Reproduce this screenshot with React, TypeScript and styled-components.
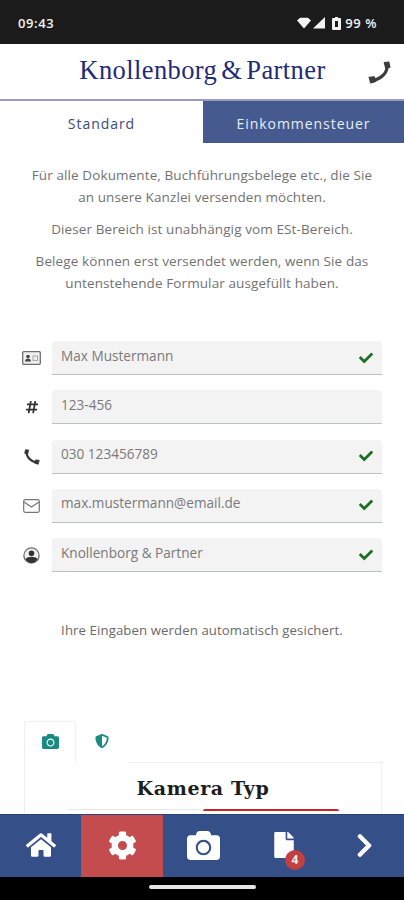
import React from "react";
import styled, { createGlobalStyle } from "styled-components";
import { FaHome, FaCog, FaCamera, FaFile, FaChevronRight, FaHashtag, FaCheck, FaShieldAlt } from "react-icons/fa";

const Global = createGlobalStyle`
  html, body { margin: 0; padding: 0; background: #fff; }
  * { box-sizing: border-box; }
  body { font-family: "Open Sans", "Liberation Sans", sans-serif; }
`;
const Screen = styled.div`
  width: 404px; height: 900px; display: flex; flex-direction: column; overflow: hidden; background: #fff;
`;
const StatusBar = styled.div`
  height: 44px; flex: none; background: #1b1b1b; color: #f2f2f2; display: flex; align-items: center;
  justify-content: space-between; padding: 2px 27px 0 18px; font-size: 13px; font-weight: 600; letter-spacing: 0.6px;
`;
const StatusRight = styled.div`
  display: flex; align-items: center; gap: 4px;
`;
const Header = styled.header`
  height: 57px; flex: none; display: flex; align-items: center; position: relative; justify-content: center;
  border-bottom: 2px solid #9c9cc2; padding: 0 0 3px 1px;
`;
const Logo = styled.div`
  font-family: "Liberation Serif", serif; font-size: 26.500px; color: #1f2a78; letter-spacing: 0.4px; word-spacing: -3px; white-space: nowrap;
`;
const HeaderCall = styled.div`
  position: absolute; right: 13px; top: 17px; line-height: 0;
`;
const Tabs = styled.div`
  height: 42px; flex: none; display: grid; grid-template-columns: 203px 201px;
`;
const Tab = styled.div<{ $active?: boolean }>`
  display: flex; align-items: center; justify-content: center; font-size: 14px; letter-spacing: 0.95px; padding-top: 2px;
  background: ${p => (p.$active ? "#fff" : "#455b90")};
  color: ${p => (p.$active ? "#3a4a78" : "#e8ecf4")};
`;
const Main = styled.main`
  flex: 1; min-height: 0; overflow: hidden; display: flex; flex-direction: column;
`;
const Intro = styled.div`
  padding: 21px 10px 0; text-align: center; color: #727272; font-size: 13.500px; line-height: 22px; letter-spacing: 0.1px;
`;
const Para = styled.p`
  margin: 0 0 10px;
`;
const Form = styled.div`
  margin-top: 37px; padding: 0 22px 0 22px; display: flex; flex-direction: column; gap: 15.300px;
`;
const Row = styled.div`
  display: flex; align-items: center; gap: 11px; height: 34px;
`;
const FieldIcon = styled.div<{ $dark?: boolean }>`
  width: 19px; flex: none; display: flex; justify-content: center; font-size: 14px; line-height: 0;
  color: ${p => (p.$dark ? "#333" : "#6f6f6f")};
`;
const Field = styled.div`
  flex: 1; height: 34px; background: #f3f3f3; border-bottom: 1.500px solid #bcc2bc; border-radius: 4px 4px 0 0;
  display: flex; align-items: center; justify-content: space-between; padding: 0 9px 5px 9px;
  color: #7a7a7a; font-size: 13.600px;
`;
const Valid = styled.span`
  color: #1c7024; font-size: 14px; line-height: 0; margin-top: 5px;
`;
const SavedNote = styled.div`
  margin-top: 49px; text-align: center; color: #6a6a6a; font-size: 13.200px; letter-spacing: 0.100px;
`;
const Card = styled.div`
  margin: 82px 22px 0 24px; flex: none;
`;
const CardTabs = styled.div`
  display: flex; height: 42px;
`;
const CardTab = styled.div<{ $active?: boolean }>`
  width: 52px; display: flex; align-items: center; justify-content: center; padding-bottom: 3px; color: #1a8a84; line-height: 0;
  background: #fff; position: relative; z-index: 1;
  ${p => (p.$active ? "border: 1px solid #f0f0f0; border-bottom: 0; border-radius: 3px 3px 0 0;" : "")}
`;
const CardBody = styled.div`
  border: 1px solid #f0f0f0; margin-top: -1px; height: 120px; display: flex; flex-direction: column; align-items: center;
`;
const CardTitle = styled.div`
  font-family: "DejaVu Serif", "Liberation Serif", serif; font-weight: 700; font-size: 19px; letter-spacing: 0.65px; color: #1d1d1d; margin-top: 14px; height: 27px;
`;
const Switcher = styled.div`
  width: 272px; height: 3px; margin-top: 5px; display: grid; grid-template-columns: 1fr 1fr;
`;
const SwitchPart = styled.div<{ $on?: boolean }>`
  border-radius: 3px 3px 0 0;
  background: ${p => (p.$on ? "#c8242c" : "#e6e6e6")};
  height: ${p => (p.$on ? "2px" : "1px")};
`;
const BottomNav = styled.nav`
  height: 63px; flex: none; background: #354f88; display: grid; grid-template-columns: 81px 82px 81px 80px 80px;
  border-top: 1px solid #2b4278;
`;
const NavItem = styled.div<{ $active?: boolean }>`
  display: flex; align-items: center; justify-content: center; color: #fff; line-height: 0; position: relative; padding-bottom: 2px;
  background: ${p => (p.$active ? "#c44c4e" : "transparent")};
`;
const Badge = styled.span`
  position: absolute; left: 41px; top: 35px; width: 20px; height: 20px; border-radius: 50%; background: #c23f42; color: #eee;
  font-size: 12px; font-weight: 700; line-height: 20px; text-align: center;
`;
const GestureBar = styled.div`
  height: 23px; flex: none; background: #000; display: flex; justify-content: center; padding-top: 8px;
`;
const Handle = styled.div`
  width: 107px; height: 4px; border-radius: 2px; background: #e6e6e6;
`;

const Handset = ({ flip, size = 22, color = "#3a3d3d" }: { flip?: boolean; size?: number; color?: string }) => (
  <svg width={size} height={size} viewBox="0 0 22 22" style={flip ? { transform: "scaleX(-1)" } : undefined} aria-hidden="true">
    <path d="M18 3.500C19.500 10.500 13 17 5 18.500" fill="none" stroke={color} strokeWidth="3" strokeLinecap="round" />
    <path d="M15.500 1.500l4.500-.5 1 5-4 1Z M1 15.500l5-.5 1.500 4.500-5 1.500Z" fill={color} stroke={color} strokeLinejoin="round" />
  </svg>
);
const IdCard = () => (
  <svg width="19" height="14" viewBox="0 0 19 14" aria-hidden="true">
    <rect x="0.700" y="0.700" width="17.600" height="12.600" rx="1" fill="#f0f0f0" stroke="#6f6f6f" strokeWidth="1.300" />
    <circle cx="6" cy="5.500" r="1.800" fill="#444" />
    <path d="M3 10.500c0-4 6-4 6 0Z" fill="#444" />
    <rect x="11" y="5" width="4.500" height="4.500" fill="none" stroke="#a8a8a8" />
  </svg>
);
const Envelope = () => (
  <svg width="17" height="14" viewBox="0 0 17 14" aria-hidden="true">
    <rect x="0.700" y="0.700" width="15.600" height="12.600" rx="1.500" fill="none" stroke="#777" strokeWidth="1.200" />
    <path d="M1 3l7.500 5L16 3" fill="none" stroke="#777" strokeWidth="1.200" />
  </svg>
);
const Contact = () => (
  <svg width="17" height="17" viewBox="0 0 17 17" aria-hidden="true">
    <circle cx="8.500" cy="8.500" r="7.600" fill="#f2f2f2" stroke="#6f6f6f" strokeWidth="1.300" />
    <circle cx="8.500" cy="6.200" r="2.800" fill="#333" />
    <path d="M2.500 12c2-3 10-3 12 0-1.500 3-4 4-6 4s-4.500-1-6-4Z" fill="#333" />
  </svg>
);

const fields = [
  { icon: <IdCard />, value: "Max Mustermann", ok: true },
  { icon: <FaHashtag />, value: "123-456", ok: false, dark: true },
  { icon: <Handset flip size={16} color="#333" />, value: "030 123456789", ok: true, dark: true },
  { icon: <Envelope />, value: "max.mustermann@email.de", ok: true },
  { icon: <Contact />, value: "Knollenborg & Partner", ok: true },
];

export default function App() {
  return (
    <Screen>
      <Global />
      <StatusBar>
        <span>09:43</span>
        <StatusRight>
          <svg width="28" height="12" viewBox="0 0 28 12" aria-hidden="true">
            <path d="M0 3.500L3 .8h8l3 2.700L7 11.500Z" fill="#f2f2f2" />
            <path d="M28 0V11.500H16Z" fill="#f2f2f2" />
          </svg>
          <svg width="9" height="13" viewBox="0 0 9 13" style={{ marginLeft: 3 }} aria-hidden="true">
            <path fillRule="evenodd" d="M3 0h3v1h2a1 1 0 0 1 1 1v10a1 1 0 0 1-1 1H1a1 1 0 0 1-1-1V2a1 1 0 0 1 1-1h2Z M3 4v6h3V4Z" fill="#f2f2f2" />
          </svg>
          <span>99 %</span>
        </StatusRight>
      </StatusBar>
      <Header>
        <Logo>Knollenborg &amp; Partner</Logo>
        <HeaderCall><Handset size={23} /></HeaderCall>
      </Header>
      <Tabs>
        <Tab $active>Standard</Tab>
        <Tab>Einkommensteuer</Tab>
      </Tabs>
      <Main>
        <Intro>
          <Para>Für alle Dokumente, Buchführungsbelege etc., die Sie<br />an unsere Kanzlei versenden möchten.</Para>
          <Para>Dieser Bereich ist unabhängig vom ESt-Bereich.</Para>
          <Para>Belege können erst versendet werden, wenn Sie das<br />untenstehende Formular ausgefüllt haben.</Para>
        </Intro>
        <Form>
          {fields.map(f => (
            <Row key={f.value}>
              <FieldIcon $dark={f.dark}>{f.icon}</FieldIcon>
              <Field>
                <span>{f.value}</span>
                {f.ok && <Valid><FaCheck /></Valid>}
              </Field>
            </Row>
          ))}
        </Form>
        <SavedNote>Ihre Eingaben werden automatisch gesichert.</SavedNote>
        <Card>
          <CardTabs>
            <CardTab $active><FaCamera size={17} /></CardTab>
            <CardTab><FaShieldAlt size={14} /></CardTab>
          </CardTabs>
          <CardBody>
            <CardTitle>Kamera Typ</CardTitle>
            <Switcher>
              <SwitchPart />
              <SwitchPart $on />
            </Switcher>
          </CardBody>
        </Card>
      </Main>
      <BottomNav>
        <NavItem><FaHome size={30} /></NavItem>
        <NavItem $active><FaCog size={29} /></NavItem>
        <NavItem><FaCamera size={33} /></NavItem>
        <NavItem><FaFile size={26} /><Badge>4</Badge></NavItem>
        <NavItem><FaChevronRight size={27} /></NavItem>
      </BottomNav>
      <GestureBar><Handle /></GestureBar>
    </Screen>
  );
}
